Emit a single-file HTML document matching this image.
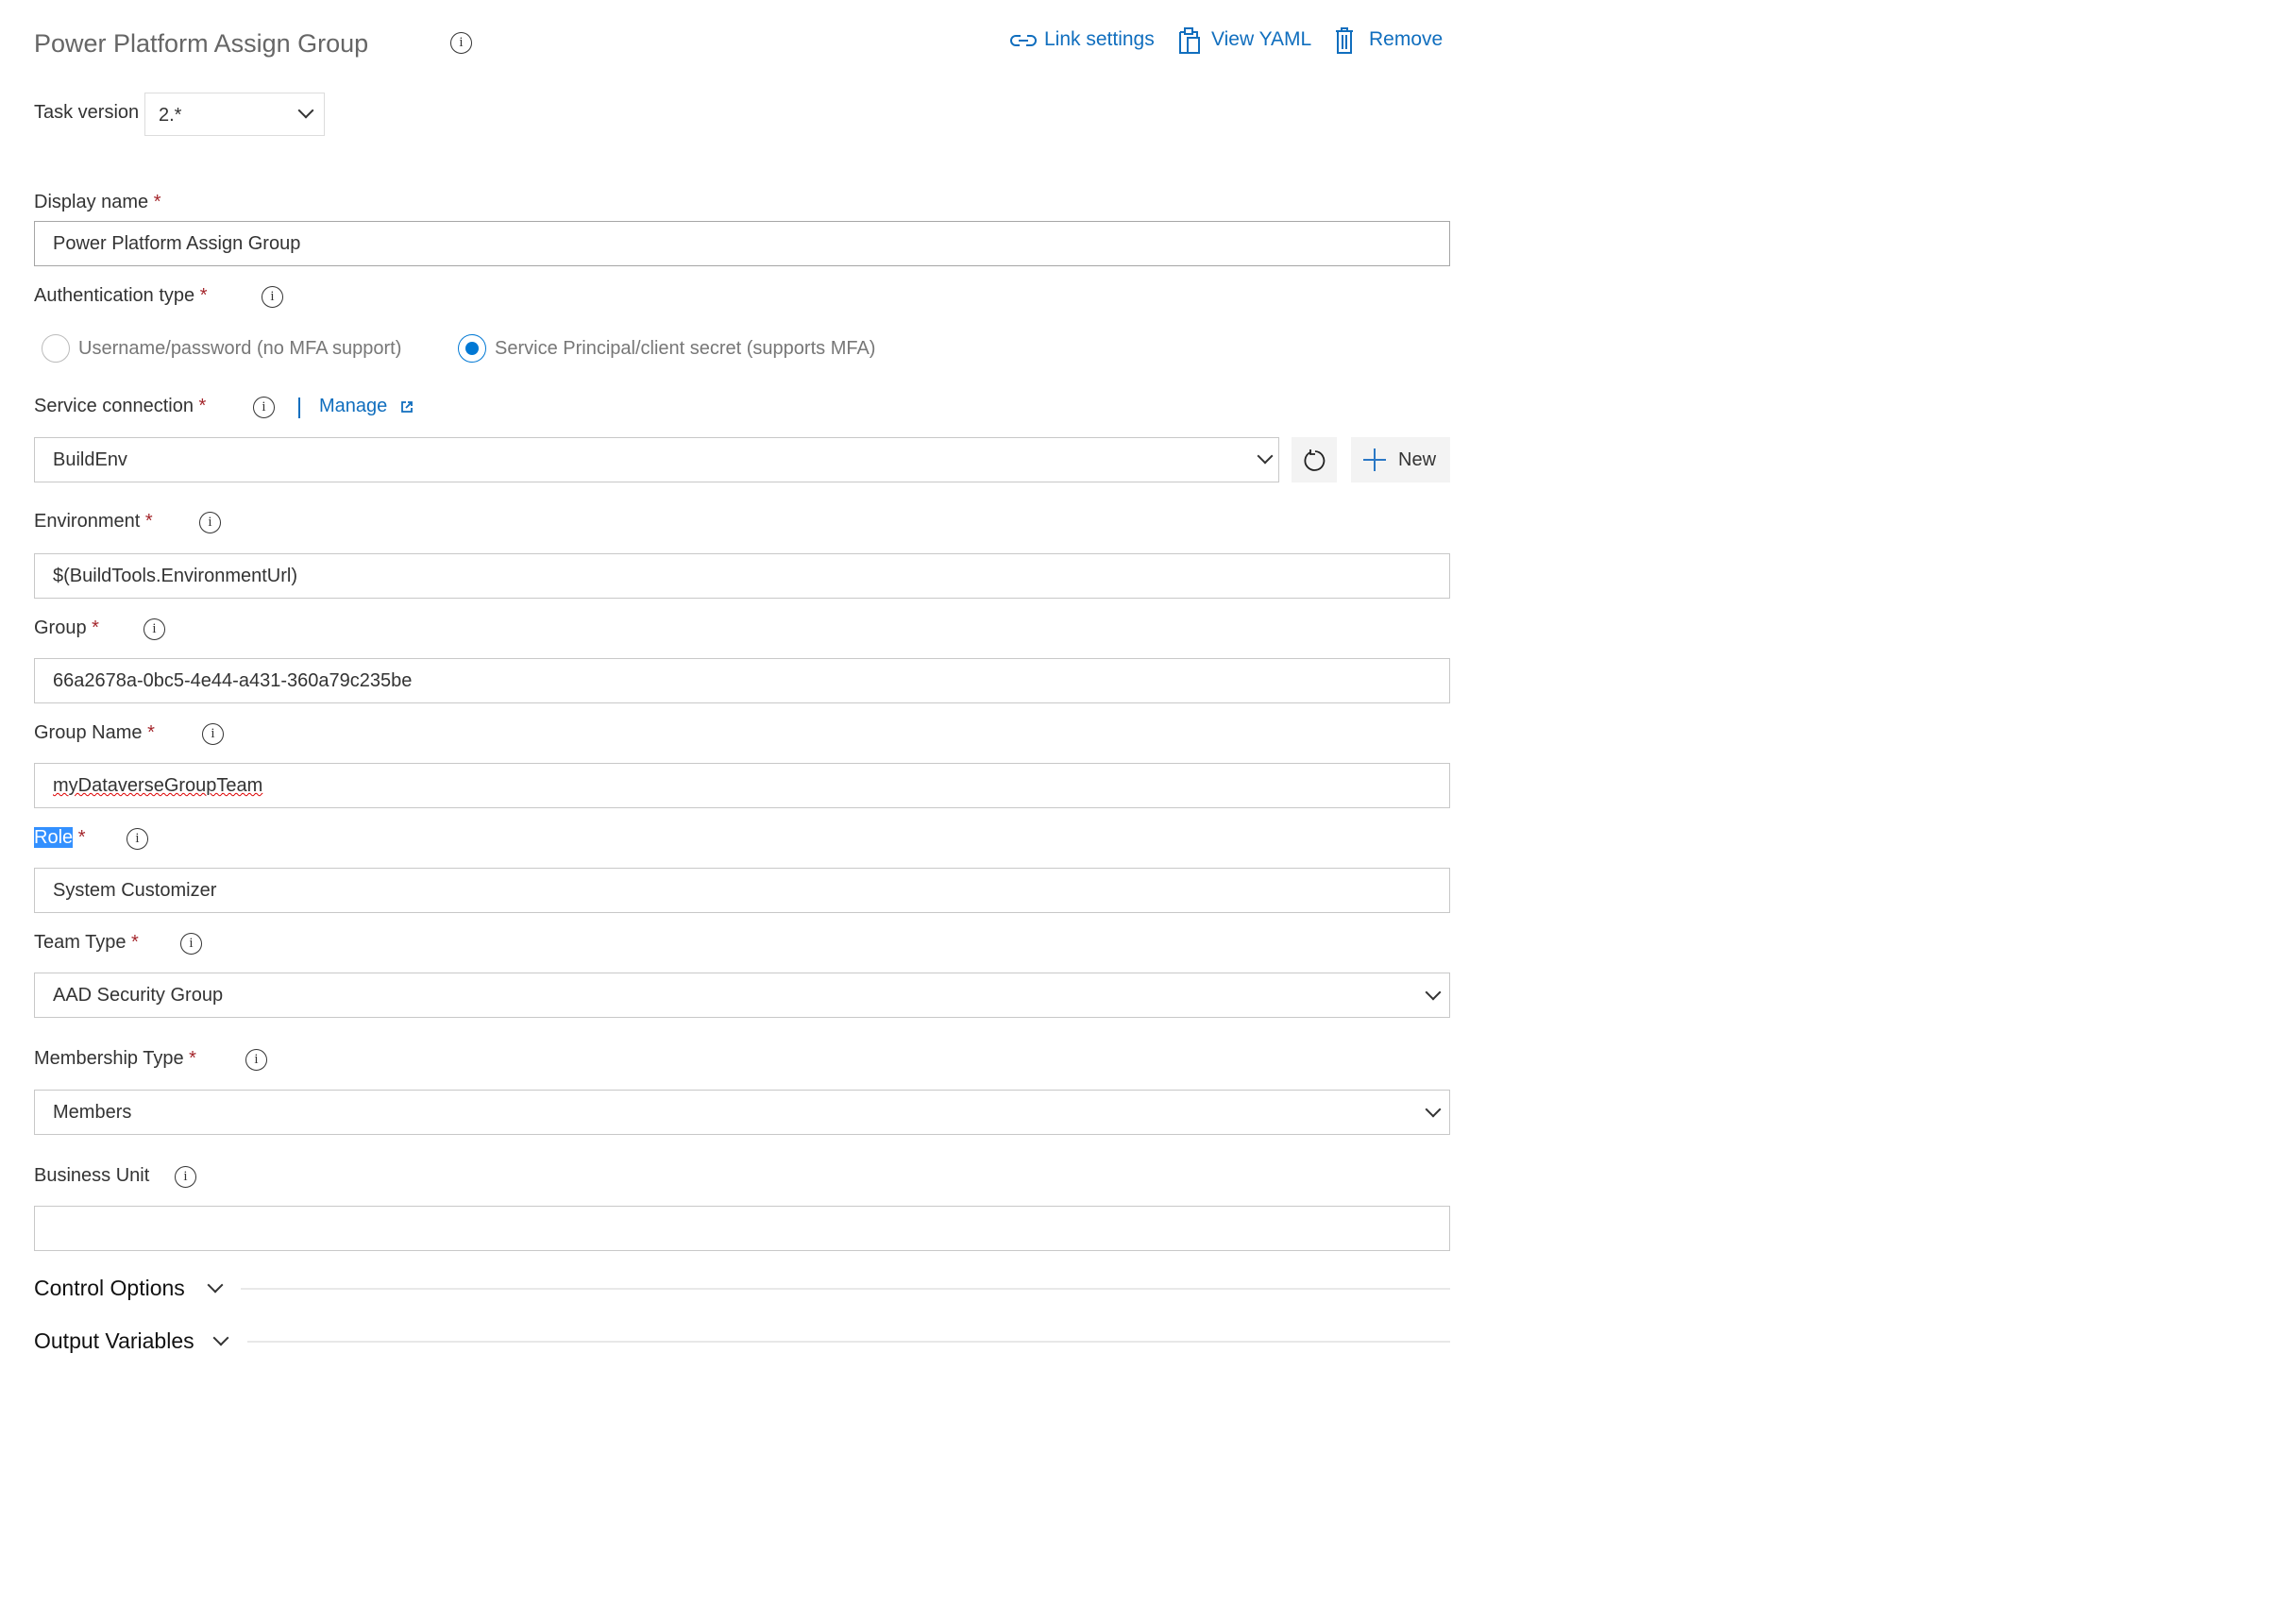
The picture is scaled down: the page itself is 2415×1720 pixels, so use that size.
<!DOCTYPE html>
<html><head><meta charset="utf-8"><style>
body{margin:0;width:2415px;height:1720px;background:#fff;font-family:"Liberation Sans",sans-serif;color:#333;position:relative;overflow:hidden}
.a{position:absolute;line-height:30px;font-size:20px;white-space:nowrap}
.req{color:#a4262c}
.box{position:absolute;left:36px;width:1498px;height:46px;border:1px solid #c8c8c8;background:#fff}
.box span{position:absolute;left:19px;top:0;line-height:46px;font-size:20px;color:#333}
.info{position:absolute;width:21px;height:21px;border:1.5px solid #333;border-radius:50%;font-size:15px;line-height:21px;text-align:center;font-family:"Liberation Serif",serif;color:#333}
.chev{position:absolute;width:10px;height:10px;border-right:2px solid #333;border-bottom:2px solid #333;transform:rotate(45deg)}
.link{color:#106ebe}
.line{position:absolute;height:2px;background:#e8e8e8}
</style></head><body>

<div class="a" style="left:36px;top:31px;font-size:27px;color:#666">Power Platform Assign Group</div>
<div class="info" style="left:477px;top:34px">i</div>

<svg style="position:absolute;left:1070px;top:32px" width="28" height="22" viewBox="0 0 28 22" fill="none" stroke="#106ebe" stroke-width="2"><path d="M11 6H6a5 5 0 0 0 0 10h4"/><path d="M17 16h5a5 5 0 0 0 0-10h-4"/><path d="M9 11h10" /></svg>
<div class="a link" style="left:1106px;top:27px;font-size:21px">Link settings</div>
<svg style="position:absolute;left:1248px;top:28px" width="24" height="30" viewBox="0 0 24 30" fill="none" stroke="#106ebe" stroke-width="2"><path d="M2 6h5M15 6h5v6"/><rect x="7" y="2" width="8" height="6"/><path d="M2 6v22h8"/><rect x="10" y="12" width="12" height="16"/></svg>
<div class="a link" style="left:1283px;top:27px;font-size:21px">View YAML</div>
<svg style="position:absolute;left:1414px;top:28px" width="20" height="30" viewBox="0 0 20 30" fill="none" stroke="#106ebe" stroke-width="2"><path d="M1 5h18M7 5V2h6v3M3 5v23h14V5M8 9v15M12 9v15"/></svg>
<div class="a link" style="left:1450px;top:27px;font-size:21px">Remove</div>

<div class="a" style="left:36px;top:104px">Task version</div>
<div style="position:absolute;left:153px;top:98px;width:189px;height:44px;border:1px solid #dcdcdc"></div>
<div class="a" style="left:168px;top:107px">2.*</div>
<div class="chev" style="left:318px;top:111px"></div>

<div class="a" style="left:36px;top:199px">Display name <span class="req">*</span></div>
<div class="box" style="top:234px;border-color:#a6a6a6"><span>Power Platform Assign Group</span></div>

<div class="a" style="left:36px;top:298px">Authentication type <span class="req">*</span></div>
<div class="info" style="left:277px;top:303px">i</div>

<div style="position:absolute;left:44px;top:354px;width:28px;height:28px;border:1.5px solid #bbb;border-radius:50%"></div>
<div class="a" style="left:83px;top:354px;color:#777">Username/password (no MFA support)</div>
<div style="position:absolute;left:485px;top:354px;width:28px;height:28px;border:1.5px solid #0078d4;border-radius:50%"></div>
<div style="position:absolute;left:493px;top:362px;width:14px;height:14px;background:#0078d4;border-radius:50%"></div>
<div class="a" style="left:524px;top:354px;color:#777">Service Principal/client secret (supports MFA)</div>

<div class="a" style="left:36px;top:415px">Service connection <span class="req">*</span></div>
<div class="info" style="left:268px;top:420px">i</div>
<div style="position:absolute;left:316px;top:421px;width:2px;height:22px;background:#106ebe"></div>
<div class="a link" style="left:338px;top:415px">Manage</div>
<svg style="position:absolute;left:424px;top:424px" width="14" height="14" viewBox="0 0 14 14" fill="none" stroke="#106ebe" stroke-width="1.8"><path d="M6 2H2v10h10V8M8 2h4v4M12 2L6 8"/></svg>

<div class="box" style="top:463px;width:1317px"><span>BuildEnv</span></div>
<div class="chev" style="left:1334px;top:477px"></div>
<div style="position:absolute;left:1368px;top:463px;width:48px;height:48px;background:#f3f3f3"></div>
<svg style="position:absolute;left:1380px;top:475px" width="26" height="26" viewBox="0 0 26 26" fill="none" stroke="#222" stroke-width="1.8"><path d="M8 4A10 10 0 1 0 13 3"/><path d="M8 1v5h5" /></svg>
<div style="position:absolute;left:1431px;top:463px;width:105px;height:48px;background:#f3f3f3"></div>
<div style="position:absolute;left:1455px;top:475px;width:2px;height:24px;background:#2b78c5"></div>
<div style="position:absolute;left:1444px;top:486px;width:24px;height:2px;background:#2b78c5"></div>
<div class="a" style="left:1481px;top:472px">New</div>

<div class="a" style="left:36px;top:537px">Environment <span class="req">*</span></div>
<div class="info" style="left:211px;top:542px">i</div>
<div class="box" style="top:586px"><span>$(BuildTools.EnvironmentUrl)</span></div>

<div class="a" style="left:36px;top:650px">Group <span class="req">*</span></div>
<div class="info" style="left:152px;top:655px">i</div>
<div class="box" style="top:697px"><span>66a2678a-0bc5-4e44-a431-360a79c235be</span></div>

<div class="a" style="left:36px;top:761px">Group Name <span class="req">*</span></div>
<div class="info" style="left:214px;top:766px">i</div>
<div class="box" style="top:808px"><span style="text-decoration:underline wavy #d00;text-decoration-thickness:1px">myDataverseGroupTeam</span></div>

<div class="a" style="left:36px;top:872px"><span style="background:#3390ff;color:#fff">Role</span> <span class="req">*</span></div>
<div class="info" style="left:134px;top:877px">i</div>
<div class="box" style="top:919px"><span>System Customizer</span></div>

<div class="a" style="left:36px;top:983px">Team Type <span class="req">*</span></div>
<div class="info" style="left:191px;top:988px">i</div>
<div class="box" style="top:1030px"><span>AAD Security Group</span></div>
<div class="chev" style="left:1512px;top:1045px"></div>

<div class="a" style="left:36px;top:1106px">Membership Type <span class="req">*</span></div>
<div class="info" style="left:260px;top:1111px">i</div>
<div class="box" style="top:1154px"><span>Members</span></div>
<div class="chev" style="left:1512px;top:1169px"></div>

<div class="a" style="left:36px;top:1230px">Business Unit</div>
<div class="info" style="left:185px;top:1235px">i</div>
<div class="box" style="top:1277px"></div>

<div class="a" style="left:36px;top:1349px;font-size:23px;color:#111">Control Options</div>
<div class="chev" style="left:222px;top:1355px"></div>
<div class="line" style="left:255px;top:1364px;width:1281px"></div>

<div class="a" style="left:36px;top:1405px;font-size:23px;color:#111">Output Variables</div>
<div class="chev" style="left:228px;top:1411px"></div>
<div class="line" style="left:262px;top:1420px;width:1274px"></div>

</body></html>
